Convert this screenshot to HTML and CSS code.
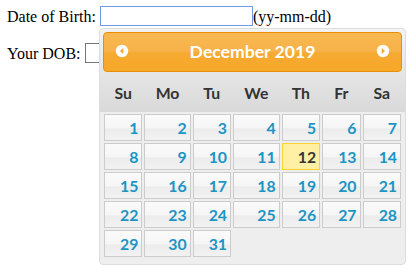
FILE: index.html
```html
<!DOCTYPE html>
<html lang="en">

<head>
  <meta charset="UTF-8" />
  <title>Datepicker</title>
  <link rel="stylesheet" href="styles.css">
</head>

<body>
  <div class="row">
    <label for="dob">Date of Birth:</label>
    <input type="text" id="dob" class="focused" />(yy-mm-dd)
  </div>

  <div class="row second">
    <label for="dob2">Your DOB:</label>
    <input type="text" id="dob2" />
  </div>

  <div class="datepicker">
    <div class="dp-header">
      <a class="dp-nav" title="Prev">
        <svg width="14" height="14" viewBox="0 0 14 14">
          <circle cx="7" cy="7" r="6.2" fill="#fff" />
          <polygon points="8.3,4 5,7 8.3,10" fill="#f6a828" />
        </svg>
      </a>
      <div class="dp-title">December 2019</div>
      <a class="dp-nav" title="Next">
        <svg width="14" height="14" viewBox="0 0 14 14">
          <circle cx="7" cy="7" r="6.2" fill="#fff" />
          <polygon points="5.7,4 9,7 5.7,10" fill="#f6a828" />
        </svg>
      </a>
    </div>

    <table class="dp-calendar">
      <thead>
        <tr>
          <th>Su</th><th>Mo</th><th>Tu</th><th>We</th><th>Th</th><th>Fr</th><th>Sa</th>
        </tr>
      </thead>
      <tbody id="days"></tbody>
    </table>
  </div>

  <script>
    const days = document.getElementById('days');
    const firstDay = 0;   // Dec 1 2019 was a Sunday
    const total = 31;
    const today = 12;

    for (let w = 0; w < 5; w++) {
      const tr = document.createElement('tr');
      for (let d = 0; d < 7; d++) {
        const td = document.createElement('td');
        const idx = w * 7 + d - firstDay + 1;
        if (idx >= 1 && idx <= total) {
          const a = document.createElement('a');
          a.className = 'dp-day';
          if (idx === today) a.classList.add('today');
          a.textContent = idx;
          td.appendChild(a);
        }
        tr.appendChild(td);
      }
      days.appendChild(tr);
    }
  </script>
</body>

</html>
```

FILE: styles.css
```css
body {
  margin: 0;
  padding: 6px 6px;
  font-family: "Liberation Serif", "Times New Roman", serif;
  font-size: 16px;
  color: #000;
}

.row {
  height: 21px;
  line-height: 21px;
}

.row.second {
  margin-top: 16px;
}

.row label {
  margin-left: 1px;
}

.row input {
  box-sizing: border-box;
  width: 153px;
  height: 20px;
  margin: 0;
  padding: 1px 2px;
  border: 1px solid #767676;
  font-size: 13px;
  vertical-align: top;
}

.row input.focused {
  border-color: #6f9be6;
  outline: none;
}

/* datepicker popup */
.datepicker {
  position: absolute;
  left: 99px;
  top: 28px;
  width: 299px;
  padding: 3px 3px 0;
  border: 1px solid #dddddd;
  border-radius: 4px;
  background: linear-gradient(to bottom, #f3f3f3 0, #d9d9d9 83px, #eeeeee 83px);
  font-family: Lato, "Liberation Sans", sans-serif;
  color: #333;
}

.dp-header {
  display: flex;
  align-items: center;
  height: 32px;
  padding: 3px 2px;
  border: 1px solid #e78f08;
  border-radius: 4px;
  background: linear-gradient(to bottom, #f8b950 0, #f7b24a 48%, #f6aa32 52%, #f6a828 100%);
  color: #fff;
}

.dp-nav {
  display: flex;
  justify-content: center;
  width: 32px;
  margin-top: -3px;
}

.dp-title {
  flex: 1;
  text-align: center;
  font-size: 17.6px;
  font-weight: bold;
  line-height: 32px;
}

.dp-calendar {
  width: 100%;
  border-collapse: collapse;
  margin: 0 0 6px;
  font-size: 15.8px;
}

.dp-calendar th {
  padding: 11px 5px;
  line-height: 19px;
  font-weight: bold;
  text-align: center;
}

.dp-calendar td {
  padding: 1px;
  border: 0;
}

.dp-day {
  display: block;
  padding: 3px;
  line-height: 19px;
  text-align: right;
  border: 1px solid #cccccc;
  background: linear-gradient(to bottom, #fafafa 0, #f6f6f6 50%, #ececec 56%, #f2f2f2 100%);
  color: #1c94c4;
  font-weight: bold;
}

.dp-day.today {
  border-color: #fed22f;
  background: #fff0a5;
  color: #363636;
}
```
